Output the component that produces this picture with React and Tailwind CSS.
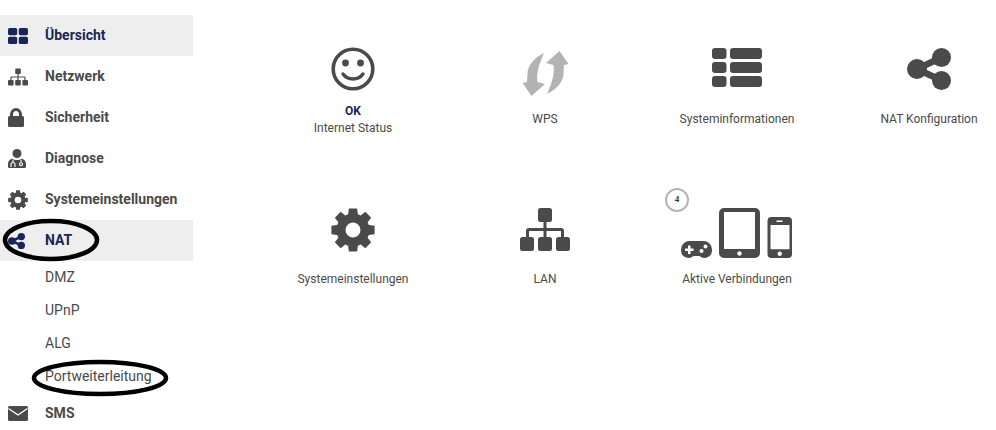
const gearPath = (cx, cy, outer, inner, hole) => {
  // eight teeth plus a round hole, filled with evenodd
  let d = ''
  for (let i = 0; i < 8; i++) {
    const a = (i * Math.PI) / 4 - Math.PI / 2
    const pts = [
      [inner, a - 0.3],
      [outer, a - 0.19],
      [outer, a + 0.19],
      [inner, a + 0.3]
    ]
    pts.forEach(([r, t], j) => {
      d += `${i === 0 && j === 0 ? 'M' : 'L'}${(cx + r * Math.cos(t)).toFixed(2)} ${(cy + r * Math.sin(t)).toFixed(2)}`
    })
  }
  d += `ZM${cx - hole} ${cy}a${hole} ${hole} 0 1 0 ${hole * 2} 0a${hole} ${hole} 0 1 0 ${-hole * 2} 0Z`
  return d
}

const GridIcon = () => (
  <svg width="20" height="16" viewBox="0 0 20 16" fill="#1b2556">
    <rect x="0" y="0" width="9.2" height="7.2" rx="1.6" />
    <rect x="10.8" y="0" width="9.2" height="7.2" rx="1.6" />
    <rect x="0" y="8.8" width="9.2" height="7.2" rx="1.6" />
    <rect x="10.8" y="8.8" width="9.2" height="7.2" rx="1.6" />
  </svg>
)

const LanShape = () => (
  <>
    <rect x="18" y="0" width="14" height="14" rx="2.5" />
    <rect x="0" y="29" width="14" height="14" rx="2.5" />
    <rect x="18" y="29" width="14" height="14" rx="2.5" />
    <rect x="36" y="29" width="14" height="14" rx="2.5" />
    <path d="M23.5 13h3v7h14.5a3 3 0 0 1 3 3v7h-3v-7h-14.5v7h-3v-7h-14.5v7h-3v-7a3 3 0 0 1 3-3h14.5z" />
  </>
)

const NetIcon = () => (
  <svg width="20" height="18" viewBox="0 0 50 43" fill="#4a4a4a"><LanShape /></svg>
)

const LockIcon = () => (
  <svg width="16" height="19" viewBox="0 0 16 19" fill="#4a4a4a">
    <path fillRule="evenodd" d="M2 8V6.500a6 6.500 0 0 1 12 0V8h.5A1.500 1.500 0 0 1 16 9.500V17.500a1.500 1.500 0 0 1-1.500 1.500h-13A1.500 1.500 0 0 1 0 17.500V9.500A1.500 1.500 0 0 1 1.500 8zM5 8h6V6.500a3 3.500 0 0 0-6 0z" />
  </svg>
)

const DoctorIcon = () => (
  <svg width="18" height="19" viewBox="0 0 18 19" fill="#4a4a4a">
    <circle cx="9" cy="4.500" r="4.500" />
    <path d="M4.500 9.500c1.200 1 2.800 1.500 4.500 1.500s3.300-.5 4.500-1.500C16 10 18 12 18 15v2.500a1.500 1.500 0 0 1-1.500 1.500h-15A1.500 1.500 0 0 1 0 17.500V15c0-3 2-5 4.500-5.500z" />
    <path d="M5 10.500v2.500M3 18v-2.500a2 2 0 0 1 4 0V18M13 10.500v3" stroke="#fff" strokeWidth="1.100" fill="none" />
    <circle cx="13" cy="15.300" r="1.500" fill="none" stroke="#fff" strokeWidth="1.100" />
  </svg>
)

const GearIcon = ({ size = 20, hole = 3.300 }) => (
  <svg width={size} height={size} viewBox="0 0 20 20" fill="#4a4a4a">
    <path fillRule="evenodd" d={gearPath(10, 10, 10, 7.500, hole)} />
  </svg>
)

const ShareIcon = ({ color, width = 17, height = 18 }) => (
  <svg width={width} height={height} viewBox="0 0 44 42" fill={color}>
    <circle cx="34.500" cy="9.500" r="9.500" />
    <circle cx="10" cy="21" r="10" />
    <circle cx="34.500" cy="32.500" r="9.500" />
    <path d="M10 21L34.500 9.500M10 21L34.500 32.500" stroke={color} strokeWidth="6.500" fill="none" />
  </svg>
)

const MailIcon = () => (
  <svg width="20" height="15" viewBox="0 0 20 15">
    <rect width="20" height="15" rx="1.500" fill="#4a4a4a" />
    <path d="M0.500 2.500L10 9l9.500-6.500" stroke="#fff" strokeWidth="1.300" fill="none" />
  </svg>
)

const SmileIcon = () => (
  <svg width="44" height="44" viewBox="0 0 44 44" fill="none" stroke="#4a4a4a">
    <circle cx="22" cy="22" r="19.800" strokeWidth="3.600" />
    <circle cx="14.500" cy="16" r="3.400" fill="#4a4a4a" stroke="none" />
    <circle cx="29.500" cy="16" r="3.400" fill="#4a4a4a" stroke="none" />
    <path d="M12 27c2.500 3.500 6 5 10 5s7.500-1.500 10-5" strokeWidth="3.400" strokeLinecap="round" />
  </svg>
)

const WPS_ARROW = 'M22 3C12 8 6 15 5.500 23c-.2 3-.3 6-.5 9l-4.500 1L9.500 46 23 34l-7.500-2c-.5-4-.5-8 .5-12 1-5 3.500-11 6-17z'

const WpsIcon = () => (
  <svg width="47" height="47" viewBox="0 0 47 47" fill="#b3b3b3">
    <path d={WPS_ARROW} />
    <path d={WPS_ARROW} transform="rotate(180 23.500 23.500)" />
  </svg>
)

const ListIcon = () => (
  <svg width="50" height="39" viewBox="0 0 50 39" fill="#4a4a4a">
    {[0, 14, 28].map((y) => (
      <g key={y}>
        <rect x="0" y={y} width="14.500" height="11" rx="3" />
        <rect x="18" y={y} width="32" height="11" rx="3" />
      </g>
    ))}
  </svg>
)

const DevicesIcon = () => (
  <svg width="112" height="51" viewBox="0 0 112 51" fill="#4a4a4a">
    {/* gamepad */}
    <path d="M8.500 33h14a8.500 8.500 0 0 1 8.500 8.500v1a7.500 7.500 0 0 1-12.500 5.500h-6A7.500 7.500 0 0 1 0 42.500v-1A8.500 8.500 0 0 1 8.500 33z" />
    <path d="M7 37.500h2.500v3h3v2.500h-3v3H7v-3H4v-2.500h3z" fill="#fff" />
    <circle cx="24.500" cy="38.500" r="2" fill="#fff" />
    <circle cx="20.500" cy="43" r="2" fill="#fff" />
    {/* tablet */}
    <path fillRule="evenodd" d="M43 0h31a5 5 0 0 1 5 5v40a5 5 0 0 1-5 5H43a5 5 0 0 1-5-5V5a5 5 0 0 1 5-5zM43 4V41H74V4z" />
    <circle cx="58.500" cy="45.500" r="2.200" fill="#fff" />
    {/* phone */}
    <path fillRule="evenodd" d="M90.500 9h16.500a4 4 0 0 1 4 4v33a4 4 0 0 1-4 4H90.500a4 4 0 0 1-4-4V13a4 4 0 0 1 4-4zM89.500 17V41.300H108.500V17z" />
    <rect x="95.500" y="12.500" width="6" height="1.500" fill="#fff" />
    <circle cx="98.700" cy="45.700" r="2.200" fill="#fff" />
  </svg>
)

const menu = [
  { label: 'Übersicht', icon: <GridIcon />, active: true },
  { label: 'Netzwerk', icon: <NetIcon /> },
  { label: 'Sicherheit', icon: <LockIcon /> },
  { label: 'Diagnose', icon: <DoctorIcon /> },
  { label: 'Systemeinstellungen', icon: <GearIcon /> },
  { label: 'NAT', icon: <ShareIcon color="#1b2556" />, active: true, children: ['DMZ', 'UPnP', 'ALG', 'Portweiterleitung'] },
  { label: 'SMS', icon: <MailIcon /> }
]

const tiles = [
  { label: 'Internet Status', status: 'OK', icon: <SmileIcon />, iconClass: 'mt-[2px]', labelClass: 'pt-[2px]' },
  { label: 'WPS', icon: <WpsIcon />, iconClass: 'mt-[5px]' },
  { label: 'Systeminformationen', icon: <ListIcon />, iconClass: 'mt-[3px]' },
  { label: 'NAT Konfiguration', icon: <ShareIcon color="#4a4a4a" width={44} height={42} />, iconClass: 'mt-[3px]' },
  { label: 'Systemeinstellungen', icon: <GearIcon size={44} hole={3.400} />, iconClass: 'mt-[3px]' },
  { label: 'LAN', icon: <svg width="50" height="43" viewBox="0 0 50 43" fill="#4a4a4a"><LanShape /></svg>, iconClass: 'mt-[3px]' },
  { label: 'Aktive Verbindungen', icon: <DevicesIcon />, iconClass: 'mt-[3px]', badge: 4 }
]

const Sidebar = () => (
  <aside className="w-[193px] shrink-0 pt-[15px]">
    {menu.map((item) => (
      <div key={item.label}>
        <div className={`flex h-[41px] items-center ${item.active ? 'bg-[#eeeeee] text-[#1b2556]' : 'text-[#4a4a4a]'}`}>
          <div className="flex w-[45px] shrink-0 justify-start pl-2">{item.icon}</div>
          <span className="text-[14px] font-bold">{item.label}</span>
        </div>
        {item.children?.map((child) => (
          <div key={child} className="flex h-[33px] items-center pl-[45px] text-[14px] text-[#4a4a4a]">
            {child}
          </div>
        ))}
      </div>
    ))}
  </aside>
)

const Tile = ({ tile }) => (
  <div className="relative flex h-[160px] flex-col items-center">
    {tile.badge && (
      <div className="absolute left-[24px] top-[-17px] flex h-6 w-6 items-center justify-center rounded-full border-2 border-[#b5b5b5] bg-white font-['Liberation_Serif',serif] text-[9px] font-bold text-[#333333]">
        {tile.badge}
      </div>
    )}
    <div className="flex h-[50px] justify-center">
      <div className={tile.iconClass}>{tile.icon}</div>
    </div>
    <div className={`mt-[6px] flex h-[36px] flex-col items-center justify-center text-[12px] leading-[17px] text-[#4a4a4a] ${tile.labelClass || ''}`}>
      {tile.status && <span className="font-bold text-[#1b2556]">{tile.status}</span>}
      <span className="whitespace-nowrap">{tile.label}</span>
    </div>
  </div>
)

export default function App() {
  return (
    <div className="relative flex h-[430px] w-[996px] overflow-hidden bg-white font-['Roboto',sans-serif]">
      <Sidebar />
      <main className="ml-[64px] grid w-[768px] shrink-0 grid-cols-4 content-start pt-[45px]">
        {tiles.map((tile) => (
          <Tile key={tile.label} tile={tile} />
        ))}
      </main>
      {/* hand-drawn marker ellipses on top of the screenshot */}
      <svg className="pointer-events-none absolute left-0 top-0" width="996" height="430" fill="none" stroke="#000000" strokeWidth="4.500">
        <ellipse cx="51" cy="240" rx="46" ry="19" />
        <ellipse cx="100" cy="378" rx="66" ry="16" />
      </svg>
    </div>
  )
}
